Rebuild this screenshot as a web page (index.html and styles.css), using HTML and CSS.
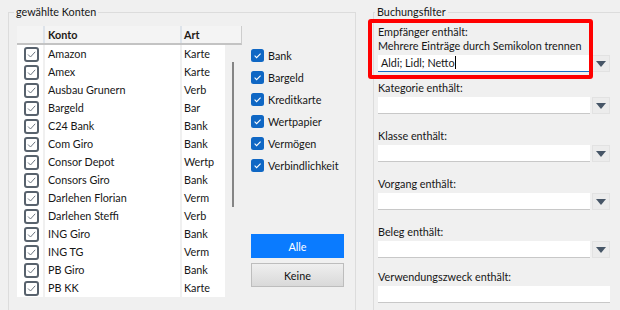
FILE: index.html
```html
<!DOCTYPE html>
<html lang="de">
<head>
  <meta charset="UTF-8" />
  <title>Konten und Buchungsfilter</title>
  <link rel="stylesheet" href="styles.css">
</head>
<body>
  <svg class="defs" width="0" height="0">
    <symbol id="cb-gray" viewBox="0 0 15 15">
      <rect x="1" y="1" width="13" height="13" rx="2" fill="#fff" stroke="#58626d" stroke-width="2"/>
      <path d="M4 7.5 L6.5 10 L11.2 4.8" fill="none" stroke="#6c7681" stroke-width="1"/>
    </symbol>
    <symbol id="cb-blue" viewBox="0 0 13 13">
      <rect x="0" y="0" width="13" height="13" rx="2.5" fill="#0f67c4"/>
      <path d="M3.6 6.6 L5.6 8.6 L9.6 4.6" fill="none" stroke="#fff" stroke-width="1.1"/>
    </symbol>
  </svg>

  <div class="window">
    <fieldset class="group accounts">
      <legend>gewählte Konten</legend>

      <div class="grid">
        <div class="grid-head">
          <span class="col-chk"></span>
          <span class="col-name">Konto</span>
          <span class="col-type">Art</span>
        </div>
        <div class="grid-body">
          <div class="rows">
            <div class="row"><span class="col-chk"><svg class="cb"><use href="#cb-gray"/></svg></span><span class="col-name">Amazon</span><span class="col-type">Karte</span></div>
            <div class="row"><span class="col-chk"><svg class="cb"><use href="#cb-gray"/></svg></span><span class="col-name">Amex</span><span class="col-type">Karte</span></div>
            <div class="row"><span class="col-chk"><svg class="cb"><use href="#cb-gray"/></svg></span><span class="col-name">Ausbau Grunern</span><span class="col-type">Verb</span></div>
            <div class="row"><span class="col-chk"><svg class="cb"><use href="#cb-gray"/></svg></span><span class="col-name">Bargeld</span><span class="col-type">Bar</span></div>
            <div class="row"><span class="col-chk"><svg class="cb"><use href="#cb-gray"/></svg></span><span class="col-name">C24 Bank</span><span class="col-type">Bank</span></div>
            <div class="row"><span class="col-chk"><svg class="cb"><use href="#cb-gray"/></svg></span><span class="col-name">Com Giro</span><span class="col-type">Bank</span></div>
            <div class="row"><span class="col-chk"><svg class="cb"><use href="#cb-gray"/></svg></span><span class="col-name">Consor Depot</span><span class="col-type">Wertp</span></div>
            <div class="row"><span class="col-chk"><svg class="cb"><use href="#cb-gray"/></svg></span><span class="col-name">Consors Giro</span><span class="col-type">Bank</span></div>
            <div class="row"><span class="col-chk"><svg class="cb"><use href="#cb-gray"/></svg></span><span class="col-name">Darlehen Florian</span><span class="col-type">Verm</span></div>
            <div class="row"><span class="col-chk"><svg class="cb"><use href="#cb-gray"/></svg></span><span class="col-name">Darlehen Steffi</span><span class="col-type">Verb</span></div>
            <div class="row"><span class="col-chk"><svg class="cb"><use href="#cb-gray"/></svg></span><span class="col-name">ING Giro</span><span class="col-type">Bank</span></div>
            <div class="row"><span class="col-chk"><svg class="cb"><use href="#cb-gray"/></svg></span><span class="col-name">ING TG</span><span class="col-type">Verm</span></div>
            <div class="row"><span class="col-chk"><svg class="cb"><use href="#cb-gray"/></svg></span><span class="col-name">PB Giro</span><span class="col-type">Bank</span></div>
            <div class="row"><span class="col-chk"><svg class="cb"><use href="#cb-gray"/></svg></span><span class="col-name">PB KK</span><span class="col-type">Karte</span></div>
          </div>
          <div class="scroll"><div class="thumb"></div></div>
        </div>
      </div>

      <div class="types">
        <label class="type"><svg class="cb-blue"><use href="#cb-blue"/></svg>Bank</label>
        <label class="type"><svg class="cb-blue"><use href="#cb-blue"/></svg>Bargeld</label>
        <label class="type"><svg class="cb-blue"><use href="#cb-blue"/></svg>Kreditkarte</label>
        <label class="type"><svg class="cb-blue"><use href="#cb-blue"/></svg>Wertpapier</label>
        <label class="type"><svg class="cb-blue"><use href="#cb-blue"/></svg>Vermögen</label>
        <label class="type"><svg class="cb-blue"><use href="#cb-blue"/></svg>Verbindlichkeit</label>
        <button class="btn btn-all">Alle</button>
        <button class="btn btn-none">Keine</button>
      </div>
    </fieldset>

    <fieldset class="group filters">
      <legend>Buchungsfilter</legend>

      <div class="filter first">
        <div class="lbl">Empfänger enthält:</div>
        <div class="lbl">Mehrere Einträge durch Semikolon trennen</div>
        <div class="field">
          <div class="input focused">Aldi; Lidl; Netto<span class="caret"></span></div>
          <div class="drop"><span class="arrow"></span></div>
        </div>
      </div>

      <div class="filter">
        <div class="lbl">Kategorie enthält:</div>
        <div class="field">
          <div class="input"></div>
          <div class="drop"><span class="arrow"></span></div>
        </div>
      </div>

      <div class="filter">
        <div class="lbl">Klasse enthält:</div>
        <div class="field">
          <div class="input"></div>
          <div class="drop"><span class="arrow"></span></div>
        </div>
      </div>

      <div class="filter">
        <div class="lbl">Vorgang enthält:</div>
        <div class="field">
          <div class="input"></div>
          <div class="drop"><span class="arrow"></span></div>
        </div>
      </div>

      <div class="filter">
        <div class="lbl">Beleg enthält:</div>
        <div class="field">
          <div class="input"></div>
          <div class="drop"><span class="arrow"></span></div>
        </div>
      </div>

      <div class="filter">
        <div class="lbl">Verwendungszweck enthält:</div>
        <div class="field">
          <div class="input wide"></div>
        </div>
      </div>
    </fieldset>

    <!-- annotation frame drawn over the first filter -->
    <div class="annot"></div>
  </div>
</body>
</html>
```

FILE: styles.css
```css
* { box-sizing: border-box; }
html, body { margin: 0; padding: 0; }
body {
  background: #f0f0f0;
  color: #161616;
  font-family: Lato, "Noto Sans", sans-serif;
  font-size: 10.8px;
  width: 620px;
  height: 310px;
  overflow: hidden;
}
.defs { position: absolute; }

.window {
  position: relative;
  display: flex;
  gap: 17px;
  padding-left: 8px;
  height: 310px;
  overflow: hidden;
}

/* group boxes */
.group {
  margin: 4px 0 0 0;
  border: 1px solid #dcdcdc;
  height: 330px;
  min-width: 0;
}
.group legend {
  padding: 0 2px;
  margin-left: -3px;
  line-height: 16px;
}
.accounts {
  width: 348px;
  flex: none;
  display: flex;
  align-items: flex-start;
  padding: 6px 11px 0 8px;
}
.filters {
  width: 260px;
  flex: none;
  padding: 5px 0 0 4px;
}

/* account grid */
.grid { width: 225px; flex: none; }
.grid-head {
  display: flex;
  height: 19px;
  line-height: 17px;
  background: #f4f4f4;
  border-bottom: 2px solid #c3c3c3;
  border-right: 1px solid #cdcdcd;
  font-weight: bold;
  color: #1e1a16;
}
.grid-head .col-chk,
.grid-head .col-name { border-right: 2px solid #dde3ea; }
.col-chk { width: 28px; flex: none; display: flex; align-items: center; padding-left: 7px; }
.col-name { width: 137px; flex: none; padding-left: 3px; white-space: nowrap; }
.col-type { flex: 1; padding-left: 2px; white-space: nowrap; overflow: hidden; }

.grid-body { display: flex; }
.rows { width: 208px; background: #fff; }
.row {
  display: flex;
  height: 18px;
  line-height: 18px;
}
.row .col-chk,
.row .col-name { border-right: 2px solid #f0f0f0; }
.cb { width: 15px; height: 15px; display: block; }

.scroll {
  width: 16px;
  background: #f0f0f0;
  padding: 17px 0 0 7px;
}
.thumb { width: 2px; height: 145px; background: #858585; }

/* account types + buttons */
.types {
  width: 93px;
  margin-left: 9px;
  padding-top: 18px;
  display: flex;
  flex-direction: column;
}
.type {
  display: flex;
  align-items: center;
  gap: 4px;
  height: 22px;
  white-space: nowrap;
}
.cb-blue { width: 13px; height: 13px; flex: none; }
.btn {
  height: 24px;
  font: inherit;
  padding: 0;
  width: 93px;
}
.btn-all {
  margin-top: 58px;
  background: #0a7bff;
  color: #fff;
  border: none;
}
.btn-none {
  margin-top: 5px;
  background: linear-gradient(#efefef, #d9d9d9);
  border: 1px solid #bdbdbd;
  color: #111;
}

/* filters */
.filter { width: 232px; margin-top: 15px; }
.filter.first { margin-top: 0; margin-bottom: -6px; }
.filter:last-child { margin-top: 12px; }
.lbl { line-height: 14px; white-space: nowrap; }
.field { display: flex; gap: 2px; margin-top: 2px; }
.input {
  flex: 1;
  height: 17px;
  background: #fff;
  border-bottom: 1px solid #c8c8c8;
  line-height: 16px;
  padding-left: 3px;
  white-space: nowrap;
}
.input.focused { border-bottom-color: #1a6fc7; }
.caret {
  display: inline-block;
  width: 1px;
  height: 13px;
  background: #000;
  vertical-align: -2px;
}
.drop {
  width: 18px;
  height: 17px;
  flex: none;
  background: #ececec;
  border: 1px solid #e2e2e2;
  display: flex;
  align-items: center;
  justify-content: center;
}
.arrow {
  border-left: 5px solid transparent;
  border-right: 5px solid transparent;
  border-top: 6px solid #475667;
}

.annot {
  position: absolute;
  left: 368px;
  top: 19px;
  width: 225px;
  height: 60px;
  border: 4px solid #ff0000;
  border-radius: 3px;
}
```
